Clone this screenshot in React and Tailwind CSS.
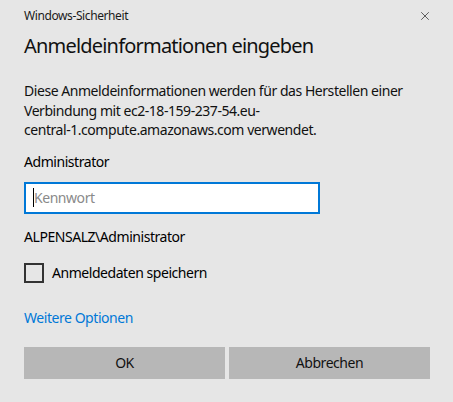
import { X } from 'lucide-react';

const font = { fontFamily: '"Noto Sans", "Open Sans", sans-serif' };

export default function App() {
	return (
		<div
			className="w-[453px] h-[402px] bg-[#e6e6e6] text-[#000] flex flex-col px-6 tracking-[-0.45px]"
			style={ font }
		>
			<div className="flex items-center justify-between h-[30px] pt-px">
				<span className="text-[12px] leading-4 text-[#1a1a1a] tracking-[-0.4px]">
					Windows-Sicherheit
				</span>
				<X className="size-[14px] -mr-[3px] text-[#222]" strokeWidth={ 1.2 } />
			</div>
			<h1 className="text-[20px] leading-7 mt-[2px] text-[#111] tracking-[-0.8px] whitespace-nowrap">
				Anmeldeinformationen eingeben
			</h1>
			<p className="text-[14px] leading-[19.5px] mt-[21px] text-[#111] whitespace-nowrap">
				Diese Anmeldeinformationen werden für das Herstellen einer
				<br />
				Verbindung mit ec2-18-159-237-54.eu-
				<br />
				central-1.compute.amazonaws.com verwendet.
			</p>
			<div className="text-[14px] leading-5 mt-[12px]">Administrator</div>
			<div className="mt-[10px] w-[296px] h-[32px] bg-white border-2 border-[#0078d7] flex items-center pl-[7px]">
				<span className="w-px h-[19px] bg-black" />
				<span className="text-[14px] text-[#8a8a8a]">Kennwort</span>
			</div>
			<div className="text-[14px] leading-5 mt-[13px]">
				ALPENSALZ\Administrator
			</div>
			<label className="flex items-center gap-[8px] mt-[16px]">
				<span className="size-[20px] border-2 border-[#333] bg-transparent" />
				<span className="text-[14px] leading-5">Anmeldedaten speichern</span>
			</label>
			<a className="text-[14px] leading-5 text-[#0078d7] mt-[25px]">
				Weitere Optionen
			</a>
			<div className="flex gap-[4px] mt-[19px] w-[406px]">
				<button className="flex-1 h-[32px] bg-[#b7b7b7] text-[14px] text-[#111]">
					OK
				</button>
				<button className="flex-1 h-[32px] bg-[#b7b7b7] text-[14px] text-[#111]">
					Abbrechen
				</button>
			</div>
		</div>
	);
}
